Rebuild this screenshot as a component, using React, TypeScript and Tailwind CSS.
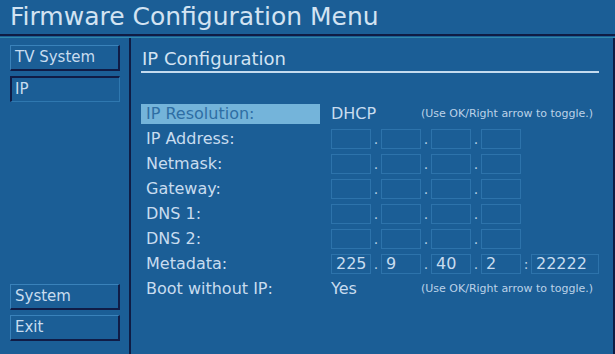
import React from "react";

const font = { fontFamily: '"DejaVu Sans", sans-serif' };

function Btn({ label, pressed }: { label: string; pressed?: boolean }) {
  return (
    <div
      className={
        pressed
          ? "h-[26px] w-[110px] border-t-2 border-l-2 border-b border-r border-t-[#101c46] border-l-[#101c46] border-b-[#2f78b0] border-r-[#2f78b0] pl-[3px] text-[15px] leading-[22px] text-[#c8dcef]"
          : "h-[26px] w-[110px] border-t border-l border-b-2 border-r-2 border-t-[#3a82ba] border-l-[#3a82ba] border-b-[#101c46] border-r-[#101c46] pl-[4px] text-[15px] leading-[23px] text-[#c8dcef]"
      }
    >
      {label}
    </div>
  );
}

function Box({ w = 40, v }: { w?: number; v?: string }) {
  return (
    <div
      className={
        (w === 40 ? "w-[40px]" : "w-[68px]") +
        " h-[20px] border border-[#2d73ab] pl-[4px] text-[16px] leading-[18px] text-[#c8dcef]"
      }
    >
      {v ?? ""}
    </div>
  );
}

function Sep({ c }: { c: string }) {
  return <div className="w-[10px] text-center text-[14px] leading-[20px] text-[#b8cfe6]">{c}</div>;
}

function IpBoxes({ vals, port }: { vals?: string[]; port?: string }) {
  return (
    <div className="flex items-center">
      <Box v={vals?.[0]} />
      <Sep c="." />
      <Box v={vals?.[1]} />
      <Sep c="." />
      <Box v={vals?.[2]} />
      <Sep c="." />
      <Box v={vals?.[3]} />
      {port !== undefined && (
        <>
          <Sep c=":" />
          <Box w={68} v={port} />
        </>
      )}
    </div>
  );
}

function Row({
  label,
  highlight,
  children,
}: {
  label: string;
  highlight?: boolean;
  children: React.ReactNode;
}) {
  return (
    <div className="flex h-[25px] items-center">
      <div
        className={
          "h-[20px] w-[179px] pl-[5px] text-[16px] leading-[20px] " +
          (highlight ? "bg-[#74b4da] text-[#2e6ea4]" : "text-[#c8dcef]")
        }
      >
        {label}
      </div>
      <div className="ml-[11px]">{children}</div>
    </div>
  );
}

function Hint() {
  return <span className="pt-[2px] text-[11px] text-[#bcd2e8]">(Use OK/Right arrow to toggle.)</span>;
}

export default function App() {
  return (
    <div style={font} className="flex h-[354px] w-[615px] flex-col overflow-hidden bg-[#1b5e96]">
      <div className="h-[34px] pl-[10px] text-[25px] leading-[33px] text-[#d2e3f2]">
        Firmware Configuration Menu
      </div>
      <div className="h-[2px] bg-[#0f1c44]" />
      <div className="h-[1px]" />
      <div className="h-[1px] bg-[#3288aa]" />
      <div className="flex flex-1 border-r-2 border-[#0f1c44]">
        <div className="flex w-[130px] flex-col justify-between pb-[13px] pl-[10px] pt-[7px]">
          <div className="flex flex-col gap-[5px]">
            <Btn label="TV System" />
            <Btn label="IP" pressed />
          </div>
          <div className="flex flex-col gap-[5px]">
            <Btn label="System" />
            <Btn label="Exit" />
          </div>
        </div>
        <div className="w-[2px] bg-[#0f1c44]" />
        <div className="flex flex-1 flex-col pl-[10px] pr-[14px] pt-[10px]">
          <div className="h-[23px] pl-[1px] text-[18px] leading-[22px] text-[#d2e3f2]">IP Configuration</div>
          <div className="h-[2px] bg-[#c4dbef]" />
          <div className="h-[28px]" />
          <Row label="IP Resolution:" highlight>
            <div className="flex items-center">
              <span className="w-[90px] text-[16px] text-[#c8dcef]">DHCP</span>
              <Hint />
            </div>
          </Row>
          <Row label="IP Address:">
            <IpBoxes />
          </Row>
          <Row label="Netmask:">
            <IpBoxes />
          </Row>
          <Row label="Gateway:">
            <IpBoxes />
          </Row>
          <Row label="DNS 1:">
            <IpBoxes />
          </Row>
          <Row label="DNS 2:">
            <IpBoxes />
          </Row>
          <Row label="Metadata:">
            <IpBoxes vals={["225", "9", "40", "2"]} port="22222" />
          </Row>
          <Row label="Boot without IP:">
            <div className="flex items-center">
              <span className="w-[90px] text-[16px] text-[#c8dcef]">Yes</span>
              <Hint />
            </div>
          </Row>
        </div>
      </div>
    </div>
  );
}
